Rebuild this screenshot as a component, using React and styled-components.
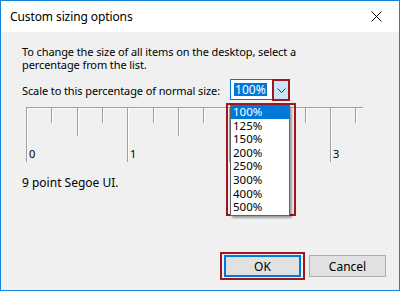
import styled, { createGlobalStyle } from "styled-components";

const GlobalStyle = createGlobalStyle`
  html, body {
    margin: 0;
    padding: 0;
    background: #f0f0f0;
  }
  * {
    box-sizing: border-box;
  }
`;

const SIZES = ["100%", "125%", "150%", "200%", "250%", "300%", "400%", "500%"];

/* ruler: ticks every quarter, labels every whole unit (2 sits under the open list) */
const RULER_X0 = 4;
const UNIT = 101.33;
const TICKS = Array.from({ length: 14 }, (_, i) => i);

function Ruler() {
  return (
    <RulerSvg width="378" height="62" viewBox="0 0 378 62">
      <line x1={RULER_X0} y1="4.5" x2="341" y2="4.5" stroke="#a0a0a0" />
      <line x1={RULER_X0} y1="5.5" x2="341" y2="5.5" stroke="#fbfbfb" />
      {TICKS.map((i) => {
        const x = Math.round(RULER_X0 + (i * UNIT) / 4) + 0.5;
        const len = i % 4 === 0 ? 54 : i % 2 === 0 ? 28 : 15;
        return (
          <g key={i}>
            <line x1={x} y1="5" x2={x} y2={5 + len} stroke="#a0a0a0" />
            <line x1={x + 1} y1="6" x2={x + 1} y2={5 + len} stroke="#fdfdfd" />
          </g>
        );
      })}
      {[0, 1, 3].map((n) => (
        <RulerLabel key={n} x={Math.round(RULER_X0 + n * UNIT) + 3} y="55">
          {n}
        </RulerLabel>
      ))}
    </RulerSvg>
  );
}

export default function App() {
  return (
    <>
      <GlobalStyle />
      <Window>
        {/* ----------- title bar ----------- */}
        <TitleBar>
          <Title>Custom sizing options</Title>
          <CloseButton>
            <svg width="11" height="11" viewBox="0 0 11 11">
              <path d="M0.5 0.5 L10.5 10.5 M10.5 0.5 L0.5 10.5" stroke="#000" strokeWidth="1" fill="none" />
            </svg>
          </CloseButton>
        </TitleBar>

        {/* ----------- body ----------- */}
        <Body>
          <Text>
            To change the size of all items on the desktop, select a
            <br />
            percentage from the list.
          </Text>

          <ScaleRow>
            <Text>Scale to this percentage of normal size:</Text>
            <Combo>
              <ComboField>
                <Selected>100%</Selected>
              </ComboField>
              <ArrowFrame>
                <ArrowButton>
                  <svg width="9" height="5" viewBox="0 0 9 5">
                    <path d="M0.5 0.5 L4.5 4.5 L8.5 0.5" stroke="#333" strokeWidth="1" fill="none" />
                  </svg>
                </ArrowButton>
              </ArrowFrame>

              <ListFrame>
                <List>
                  {SIZES.map((s, i) => (
                    <ListItem key={s} $active={i === 0}>
                      {s}
                    </ListItem>
                  ))}
                </List>
              </ListFrame>
            </Combo>
          </ScaleRow>

          <Ruler />

          <Sample>9 point Segoe UI.</Sample>
        </Body>

        {/* ----------- buttons ----------- */}
        <Footer>
          <OkFrame>
            <Button $primary>OK</Button>
          </OkFrame>
          <Button>Cancel</Button>
        </Footer>
      </Window>
    </>
  );
}

/* ===================== CSS ===================== */

const Window = styled.div`
  width: 400px;
  height: 291px;
  border: 1px solid #1883d7;
  background: #f0f0f0;
  display: flex;
  flex-direction: column;
  font-family: "Noto Sans", "Liberation Sans", sans-serif;
  font-size: 11px;
  color: #000;
`;

const TitleBar = styled.div`
  height: 31px;
  background: #fff;
  display: flex;
  align-items: center;
  justify-content: space-between;
  padding: 0 10px 0 9px;
`;

const Title = styled.div`
  font-size: 12px;
  letter-spacing: -0.1px;
  color: #000;
`;

const CloseButton = styled.div`
  width: 20px;
  display: flex;
  justify-content: center;
  margin-right: 3px;
`;

const Body = styled.div`
  padding: 13px 0 0 21px;
  display: flex;
  flex-direction: column;
`;

const Text = styled.div`
  line-height: 13px;
  letter-spacing: -0.1px;
`;

const ScaleRow = styled.div`
  display: flex;
  align-items: center;
  gap: 10px;
  margin-top: 8px;
`;

const Combo = styled.div`
  position: relative;
  display: flex;
  height: 22px;
`;

const ComboField = styled.div`
  width: 42px;
  height: 21px;
  border: 1px solid #0078d7;
  border-right: none;
  background: #fff;
  display: flex;
  align-items: center;
  padding-left: 3px;
`;

const Selected = styled.span`
  background: #0078d7;
  color: #fff;
  line-height: 13px;
  padding: 0 1px;
  font-size: 12px;
`;

const ArrowFrame = styled.div`
  width: 18px;
  height: 22px;
  border: 2px solid #a0161d;
`;

const ArrowButton = styled.div`
  height: 100%;
  background: #cce4f7;
  display: flex;
  align-items: center;
  justify-content: center;
`;

/* ----------- dropdown list (overlay) ----------- */

const ListFrame = styled.div`
  position: absolute;
  top: 24px;
  left: -4px;
  width: 70px;
  height: 113px;
  border: 2px solid #a0161d;
  padding: 0 0 0 2px;
`;

const List = styled.div`
  width: 60px;
  background: #fff;
  border: 1px solid #646464;
  border-top: none;
  box-shadow: 2px 2px 2px rgba(0, 0, 0, 0.35);
  padding-bottom: 1px;
`;

const ListItem = styled.div`
  height: 13.6px;
  line-height: 13.6px;
  font-size: 11.5px;
  padding-left: 2px;
  overflow: hidden;
  background: ${(p) => (p.$active ? "#0078d7" : "transparent")};
  color: ${(p) => (p.$active ? "#fff" : "#000")};
`;

/* ----------- ruler ----------- */

const RulerSvg = styled.svg`
  display: block;
  margin-top: 2px;
`;

const RulerLabel = styled.text`
  font-family: "Noto Sans", "Liberation Sans", sans-serif;
  font-size: 11px;
  fill: #000;
`;

const Sample = styled.div`
  margin-top: 11px;
  font-size: 12px;
  line-height: 14px;
`;

/* ----------- footer buttons ----------- */

const Footer = styled.div`
  margin-top: auto;
  display: flex;
  justify-content: flex-end;
  align-items: center;
  gap: 4px;
  padding: 0 13px 10px 0;
`;

const OkFrame = styled.div`
  border: 2px solid #a0161d;
  padding: 1px 2px;
`;

const Button = styled.div`
  width: 77px;
  height: 22px;
  display: flex;
  align-items: center;
  justify-content: center;
  font-size: 12px;
  background: #e1e1e1;
  border: ${(p) => (p.$primary ? "2px solid #0078d7" : "1px solid #adadad")};
`;
